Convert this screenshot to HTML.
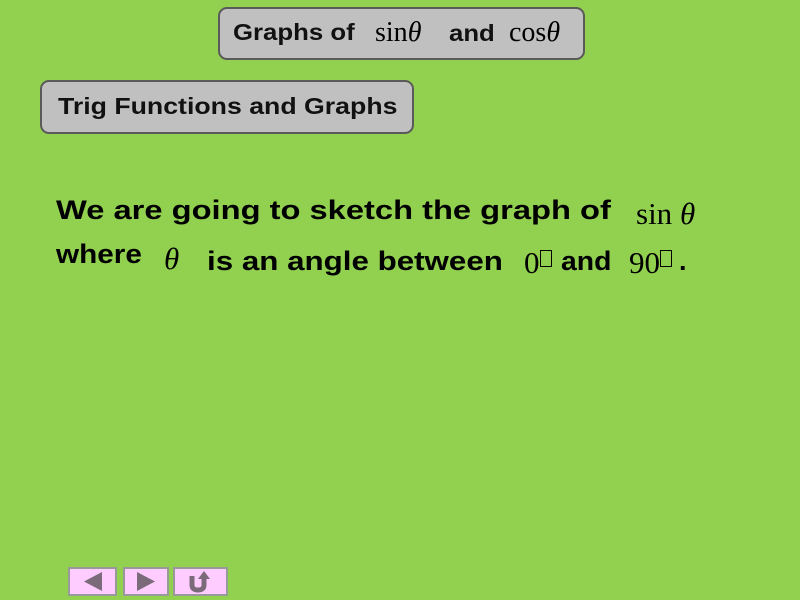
<!DOCTYPE html>
<html><head><style>
body{margin:0;width:800px;height:600px;background:#92d050;position:relative;overflow:hidden;font-family:"Liberation Sans",sans-serif;}
.box{position:absolute;background:#c0c0c0;border:2px solid #5a5a5a;border-radius:9px;box-sizing:border-box}
.s{position:absolute;font-weight:bold;color:#111;white-space:nowrap;transform-origin:0 0}
.t{position:absolute;font-weight:bold;font-size:27px;color:#000;white-space:nowrap;transform-origin:0 0}
.m{position:absolute;font-family:"Liberation Serif",serif;font-weight:normal;color:#000;white-space:nowrap}
.sq{display:inline-block;width:10px;height:15px;border:1px solid #000;vertical-align:top;margin-top:5px}
.nav{position:absolute;top:567px;height:29px;background:#ffccff;border:2px solid #999;box-sizing:border-box}
</style></head><body>
<div class="box" style="left:218px;top:7px;width:367px;height:53px"></div>
<div class="s" style="left:233px;top:19px;font-size:23px;transform:scaleX(1.12)">Graphs of</div>
<div class="m" style="left:375px;top:17px;font-size:28px">sin<i>θ</i></div>
<div class="s" style="left:449px;top:20px;font-size:23px;transform:scaleX(1.12)">and</div>
<div class="m" style="left:509px;top:17px;font-size:28px">cos<i>θ</i></div>
<div class="box" style="left:40px;top:80px;width:374px;height:54px"></div>
<div class="s" style="left:58px;top:93px;font-size:23px;transform:scaleX(1.16)">Trig Functions and Graphs</div>
<div class="t" style="left:56px;top:195px;transform:scaleX(1.21)">We are going to sketch the graph of</div>
<div class="m" style="left:636px;top:196px;font-size:31px">sin <i>θ</i></div>
<div class="t" style="left:56px;top:239px;transform:scaleX(1.1)">where</div>
<div class="m" style="left:164px;top:241px;font-size:31px"><i>θ</i></div>
<div class="t" style="left:207px;top:246px;transform:scaleX(1.16)">is an angle between</div>
<div class="m" style="left:524px;top:245px;font-size:31px">0<span class="sq"></span></div>
<div class="t" style="left:561px;top:246px;transform:scaleX(1.05)">and</div>
<div class="m" style="left:629px;top:245px;font-size:31px">90<span class="sq"></span></div>
<div class="t" style="left:679px;top:246px">.</div>
<div class="nav" style="left:68px;width:49px"><svg width="45" height="25"><polygon points="14,12.5 32,3 32,22" fill="#7a6a7a"/></svg></div>
<div class="nav" style="left:123px;width:46px"><svg width="42" height="25"><polygon points="30,12.5 12,3 12,22" fill="#7a6a7a"/></svg></div>
<div class="nav" style="left:173px;width:55px"><svg width="51" height="25"><path d="M17 7 V16 Q17 21 23 21 Q29 21 29 16 V10" fill="none" stroke="#7a6a7a" stroke-width="5"/><polygon points="23,10 35,10 29,2" fill="#7a6a7a"/></svg></div>
</body></html>
